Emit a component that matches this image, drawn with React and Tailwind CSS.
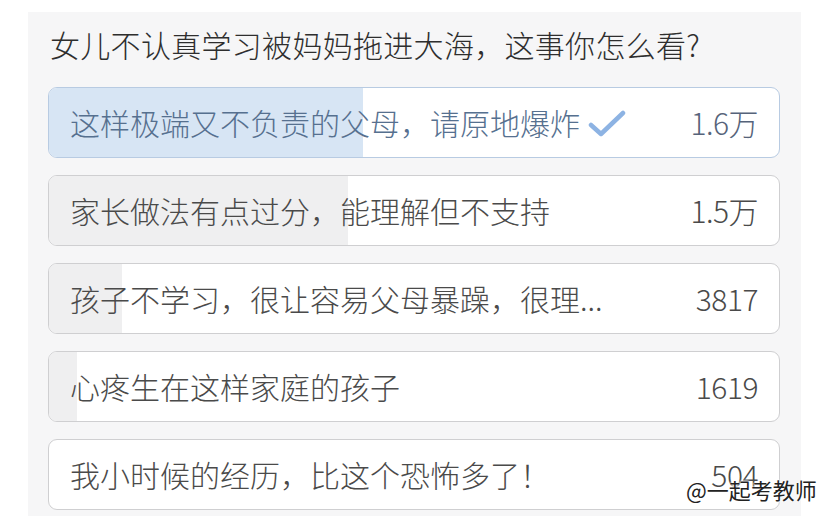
import React from 'react'

const options = [
  { text: '这样极端又不负责的父母，请原地爆炸', count: '1.6万', fill: 314, chosen: true },
  { text: '家长做法有点过分，能理解但不支持', count: '1.5万', fill: 299 },
  { text: '孩子不学习，很让容易父母暴躁，很理...', count: '3817', fill: 73 },
  { text: '心疼生在这样家庭的孩子', count: '1619', fill: 28 },
  { text: '我小时候的经历，比这个恐怖多了！', count: '504', fill: 0 },
]

function Check() {
  return (
    <svg width="38" height="28" viewBox="0 0 38 28" className="ml-[8px] mt-[4px]">
      <path d="M3 15 L13 24 L35 3" fill="none" stroke="#8db3e3" strokeWidth="4.5" strokeLinecap="round" strokeLinejoin="round" />
    </svg>
  )
}

const App = () => {
  return (
    <div className="relative w-[826px] h-[516px] bg-white overflow-hidden font-['Noto_Sans_CJK_SC','Noto_Sans',sans-serif]">
      <div className="ml-[28px] mt-[12px] w-[773px] h-[504px] bg-[#f6f6f7] px-[20px]">
        <div className="pt-[15px] pl-[2px] text-[30px] leading-[34px] font-light text-[#2e2e2e] tracking-[0.3px]">
          女儿不认真学习被妈妈拖进大海，这事你怎么看?
        </div>
        <div className="mt-[26px] flex flex-col gap-[17px]">
          {options.map((o, i) => (
            <div
              key={i}
              className={
                'relative h-[71px] w-[732px] rounded-[9px] border overflow-hidden bg-white ' +
                (o.chosen ? 'border-[#b8cbe2]' : 'border-[#cfcfd1]')
              }
            >
              <div
                className={'absolute left-0 top-0 bottom-0 ' + (o.chosen ? 'bg-[#d7e5f4]' : 'bg-[#efeff0]')}
                style={{ width: o.fill }}
              />
              <div className="relative flex items-center h-full pl-[21px] pr-[21px] pb-[2px]">
                <span className={'text-[30px] leading-[34px] font-light ' + (o.chosen ? 'text-[#56708f]' : 'text-[#4a4a4a]')}>
                  {o.text}
                </span>
                {o.chosen && <Check />}
                <span className={'ml-auto text-[30px] leading-[34px] font-light tracking-[-0.5px] ' + (o.chosen ? 'text-[#56637a]' : 'text-[#4a4a4a]')}>
                  {o.count}
                </span>
              </div>
            </div>
          ))}
        </div>
      </div>
      <div className="absolute left-[686px] top-[474px] text-[22px] leading-[30px] text-[#222] [text-shadow:0_0_2px_#fff,0_0_2px_#fff,0_0_3px_#fff]">
        @一起考教师
      </div>
    </div>
  )
}

export default App
